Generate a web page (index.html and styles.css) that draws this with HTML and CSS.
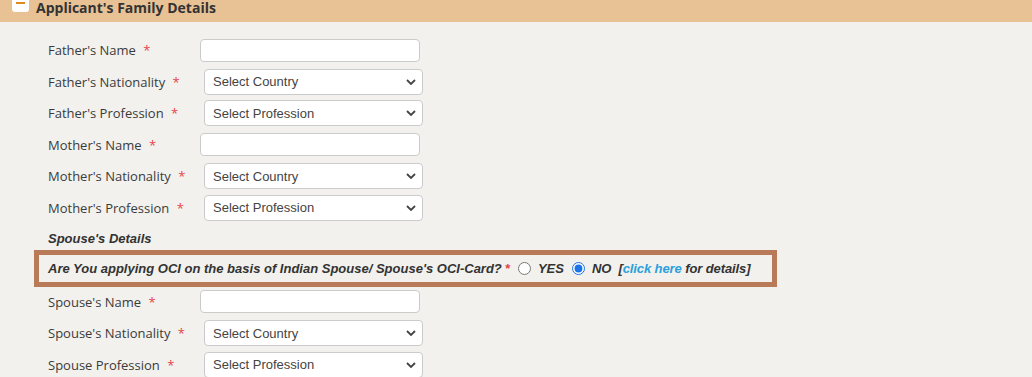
FILE: index.html
```html
<!DOCTYPE html>
<html lang="en">
  <head>
    <meta charset="UTF-8" />
    <meta name="viewport" content="width=device-width, initial-scale=1.0" />
    <title>Applicant's Family Details</title>
    <link rel="stylesheet" href="styles.css">
  </head>
  <body>
    <div class="panel-head">
      <span class="toggle"><span class="toggle-bar"></span></span>
      <span class="panel-title">Applicant's Family Details</span>
    </div>

    <div class="panel-body">
      <div class="row">
        <label class="field-label">Father's Name <span class="req">*</span></label>
        <input class="text-input" type="text" />
      </div>
      <div class="row">
        <label class="field-label">Father's Nationality <span class="req">*</span></label>
        <span class="select-wrap">
          <select class="select-input"><option>Select Country</option></select>
          <svg class="chevron" width="10" height="6" viewBox="0 0 10 6"><path d="M1 1l4 4 4-4" fill="none" stroke="#444" stroke-width="1.8"/></svg>
        </span>
      </div>
      <div class="row">
        <label class="field-label">Father's Profession <span class="req">*</span></label>
        <span class="select-wrap">
          <select class="select-input"><option>Select Profession</option></select>
          <svg class="chevron" width="10" height="6" viewBox="0 0 10 6"><path d="M1 1l4 4 4-4" fill="none" stroke="#444" stroke-width="1.8"/></svg>
        </span>
      </div>
      <div class="row">
        <label class="field-label">Mother's Name <span class="req">*</span></label>
        <input class="text-input" type="text" />
      </div>
      <div class="row">
        <label class="field-label">Mother's Nationality <span class="req">*</span></label>
        <span class="select-wrap">
          <select class="select-input"><option>Select Country</option></select>
          <svg class="chevron" width="10" height="6" viewBox="0 0 10 6"><path d="M1 1l4 4 4-4" fill="none" stroke="#444" stroke-width="1.8"/></svg>
        </span>
      </div>
      <div class="row">
        <label class="field-label">Mother's Profession <span class="req">*</span></label>
        <span class="select-wrap">
          <select class="select-input"><option>Select Profession</option></select>
          <svg class="chevron" width="10" height="6" viewBox="0 0 10 6"><path d="M1 1l4 4 4-4" fill="none" stroke="#444" stroke-width="1.8"/></svg>
        </span>
      </div>

      <div class="sub-head">Spouse's Details</div>

      <div class="spouse-box">Are You applying OCI on the basis of Indian Spouse/ Spouse's OCI-Card?<span class="req-bold">*</span><input class="radio" type="radio" name="spouse" />YES<input class="radio" type="radio" name="spouse" checked />NO<span class="details">[<a class="details-link" href="#">click here</a> for details]</span></div>

      <div class="row">
        <label class="field-label">Spouse's Name <span class="req">*</span></label>
        <input class="text-input" type="text" />
      </div>
      <div class="row">
        <label class="field-label">Spouse's Nationality <span class="req">*</span></label>
        <span class="select-wrap">
          <select class="select-input"><option>Select Country</option></select>
          <svg class="chevron" width="10" height="6" viewBox="0 0 10 6"><path d="M1 1l4 4 4-4" fill="none" stroke="#444" stroke-width="1.8"/></svg>
        </span>
      </div>
      <div class="row">
        <label class="field-label">Spouse Profession <span class="req">*</span></label>
        <span class="select-wrap">
          <select class="select-input"><option>Select Profession</option></select>
          <svg class="chevron" width="10" height="6" viewBox="0 0 10 6"><path d="M1 1l4 4 4-4" fill="none" stroke="#444" stroke-width="1.8"/></svg>
        </span>
      </div>
    </div>
  </body>
</html>
```

FILE: styles.css
```css
body {
  margin: 0;
  background: #f2f1ed;
  font-family: "Open Sans", "Noto Sans", sans-serif;
  color: #333;
}
.panel-head {
  height: 22px;
  background: #e8c194;
  display: flex;
  align-items: flex-start;
  padding-left: 12px;
  overflow: hidden;
}
.toggle {
  width: 17px;
  height: 17px;
  margin-top: -5px;
  background: #fff;
  border-radius: 3px;
  flex: none;
  display: flex;
  justify-content: center;
}
.toggle-bar {
  width: 9px;
  height: 2px;
  margin-top: 7px;
  background: #dd8a1f;
}
.panel-title {
  margin-left: 7px;
  margin-top: -2.5px;
  font-size: 14px;
  font-weight: 700;
  line-height: 20px;
  color: #333;
}
.panel-body {
  padding: 12.25px 0 0 34px;
}
.row {
  height: 31.5px;
  display: flex;
  align-items: center;
  padding-left: 14px;
}
.field-label {
  width: 152px;
  flex: none;
  font-size: 13px;
  color: #3b3b3b;
}
.req {
  color: #e8434a;
  margin-left: 4px;
}
.text-input {
  box-sizing: border-box;
  width: 220px;
  height: 23px;
  margin: 0;
  border: 1px solid #cbcbcb;
  border-radius: 4px;
  background: #fff;
}
.select-wrap {
  position: relative;
  display: block;
  margin-left: 4px;
}
.select-input {
  display: block;
  box-sizing: border-box;
  width: 219px;
  height: 26px;
  margin: 0;
  padding: 0 8px;
  border: 1px solid #cbcbcb;
  border-radius: 4px;
  background: #fff;
  appearance: none;
  font-family: "Liberation Sans", Arial, sans-serif;
  font-size: 13px;
  color: #444;
}
.chevron {
  position: absolute;
  right: 7px;
  top: 10px;
  pointer-events: none;
}
.sub-head {
  height: 27px;
  box-sizing: border-box;
  padding: 4px 0 0 14px;
  line-height: 23px;
  font-family: "Liberation Sans", Arial, sans-serif;
  font-size: 13px;
  font-weight: 700;
  font-style: italic;
  color: #333;
}
.spouse-box {
  width: 743px;
  height: 37px;
  box-sizing: border-box;
  border: 5px solid #b97a57;
  margin-bottom: -1.5px;
  padding: 0 0 0 9px;
  line-height: 27px;
  white-space: nowrap;
  font-family: "Liberation Sans", Arial, sans-serif;
  font-size: 13px;
  font-weight: 700;
  font-style: italic;
  color: #333;
}
.req-bold {
  color: #e8434a;
  margin-left: 3px;
}
.radio {
  width: 13px;
  height: 13px;
  margin: 0 7px 0 8px;
  vertical-align: -2px;
  accent-color: #1a73e8;
}
.details {
  margin-left: 7px;
  letter-spacing: -0.1px;
}
.details-link {
  color: #2aa0dc;
  text-decoration: none;
}
```
